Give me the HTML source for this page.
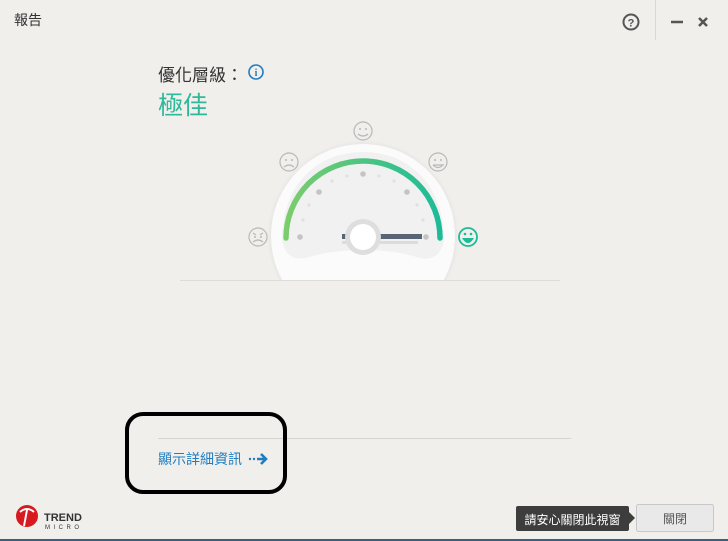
<!DOCTYPE html>
<html><head><meta charset="utf-8"><style>
body{margin:0;width:728px;height:541px;background:#f0efec;position:relative;overflow:hidden;font-family:"Liberation Sans","Noto Sans CJK TC",sans-serif;}
.a{position:absolute}
</style></head><body>
<div class="a" style="left:14px;top:10px;font-size:14px;color:#333">報告</div>
<svg class="a" style="left:0;top:0" width="728" height="541">
 <circle cx="631" cy="22" r="7.5" fill="none" stroke="#555" stroke-width="2"/>
 <text x="631" y="26.5" font-size="11" font-weight="bold" text-anchor="middle" fill="#555" font-family="Liberation Sans">?</text>
 <line x1="655.5" y1="0" x2="655.5" y2="40" stroke="#d8d7d3"/>
 <line x1="671" y1="22" x2="683" y2="22" stroke="#555" stroke-width="2.5"/>
 <path d="M699 18L707 26M707 18L699 26" stroke="#555" stroke-width="2.5"/>
 <!-- info icon -->
 <circle cx="256" cy="72" r="7" fill="none" stroke="#1f7ec1" stroke-width="1.6"/>
 <text x="256" y="76" font-size="10" font-weight="bold" text-anchor="middle" fill="#1f7ec1" font-family="Liberation Serif">i</text>
 <!-- gauge -->
 <defs>
  <linearGradient id="g" x1="0" x2="1"><stop offset="0" stop-color="#7ccd6c"/><stop offset="1" stop-color="#1dbb98"/></linearGradient>
  <clipPath id="c"><rect x="0" y="0" width="728" height="280"/></clipPath>
  <radialGradient id="sh" cx="0.5" cy="0.5" r="0.5"><stop offset="0.9" stop-color="#ddd"/><stop offset="1" stop-color="#f0efec"/></radialGradient>
 </defs>
 <line x1="180" y1="280.5" x2="560" y2="280.5" stroke="#dddcd8"/>
 <g clip-path="url(#c)">
  <circle cx="363" cy="236" r="96" fill="url(#sh)"/>
  <circle cx="363" cy="236" r="92" fill="#fbfbfb"/>
  <path d="M282 240 Q283 180 330 158 Q363 146 396 158 Q443 180 444 240 Q440 262 420 258 Q395 250 363 250 Q331 250 306 258 Q286 262 282 240Z" fill="#f1f1f1"/>
 </g>
 <path d="M286 238 A77 77 0 0 1 440 238" fill="none" stroke="url(#g)" stroke-width="5.5" stroke-linecap="round"/>
 <g fill="#c4c4c4">
  <circle cx="300" cy="237" r="2.8"/><circle cx="319" cy="192" r="2.8"/><circle cx="363" cy="174" r="2.8"/><circle cx="407" cy="192" r="2.8"/><circle cx="426" cy="237" r="2.8"/>
 </g>
 <g fill="#e0e0e0">
  <circle cx="303" cy="220" r="1.6"/><circle cx="309" cy="205" r="1.6"/><circle cx="332" cy="181" r="1.6"/><circle cx="347" cy="176" r="1.6"/><circle cx="379" cy="176" r="1.6"/><circle cx="394" cy="181" r="1.6"/><circle cx="417" cy="205" r="1.6"/><circle cx="423" cy="220" r="1.6"/>
 </g>
 <rect x="342" y="234" width="80" height="5" fill="#576575"/>
 <rect x="342" y="241" width="76" height="3" fill="#dcdcdc"/>
 <circle cx="363" cy="237" r="18" fill="#dedede"/>
 <circle cx="363" cy="237" r="13" fill="#fff"/>
 <!-- faces -->
 <g fill="none" stroke="#b8b8b8" stroke-width="1.2">
  <circle cx="363" cy="131" r="9"/><path d="M358 134 Q363 138 368 134"/>
  <circle cx="289" cy="162" r="9"/><path d="M284 167 Q289 163 294 167"/>
  <circle cx="438" cy="162" r="9"/><path d="M433 165 L443 165 Q438 170 433 165"/>
  <circle cx="258" cy="237" r="9"/><path d="M253 242 Q258 238 263 242M253 233 L256 235M263 233 L260 235"/>
 </g>
 <g fill="#b8b8b8"><circle cx="360" cy="129" r="1"/><circle cx="366" cy="129" r="1"/><circle cx="286" cy="160" r="1"/><circle cx="292" cy="160" r="1"/><circle cx="435" cy="160" r="1"/><circle cx="441" cy="160" r="1"/><circle cx="255" cy="237" r="1"/><circle cx="261" cy="237" r="1"/></g>
 <circle cx="468" cy="237" r="9" fill="none" stroke="#1dbb98" stroke-width="1.8"/>
 <path d="M462 238 L474 238 Q468 248 462 238Z" fill="#1dbb98"/>
 <circle cx="465" cy="234" r="1.3" fill="#1dbb98"/><circle cx="471" cy="234" r="1.3" fill="#1dbb98"/>
 <!-- divider -->
 <line x1="158" y1="438.5" x2="571" y2="438.5" stroke="#d6d5d1"/>
 <!-- arrow -->
 <circle cx="250" cy="459" r="1.2" fill="#1f7ec1"/><circle cx="254" cy="459" r="1.2" fill="#1f7ec1"/>
 <path d="M257 459 L265 459 M261 454 L266 459 L261 464" stroke="#1f7ec1" stroke-width="2.6" fill="none"/>
 <!-- black box -->
 <rect x="127" y="414" width="158" height="78" rx="16" fill="none" stroke="#000" stroke-width="4"/>
 <!-- logo -->
 <circle cx="27" cy="516" r="11" fill="#d71920"/>
 <path d="M20 512 Q27 506 34 512 M27 510 L24 526" stroke="#fff" stroke-width="2" fill="none"/>
 <text x="44" y="521" font-size="11" font-weight="bold" fill="#333" font-family="Liberation Sans">TREND</text>
 <text x="45" y="529" font-size="6" fill="#333" letter-spacing="3.5" font-family="Liberation Sans">MICRO</text>
 <!-- tooltip & button -->
 <rect x="516" y="506" width="113" height="25" rx="2" fill="#3d3d3d"/>
 <path d="M629 512 L635 518 L629 524Z" fill="#3d3d3d"/>
 <rect x="636.5" y="504.5" width="77" height="27" rx="2" fill="#e9e9e9" stroke="#c8c8c8"/>
 <rect x="0" y="539" width="728" height="2" fill="#3a5f80"/>
</svg>
<div class="a" style="left:158px;top:61px;font-size:17px;color:#333">優化層級：</div>
<div class="a" style="left:158px;top:86px;font-size:25px;color:#2fb89a">極佳</div>
<div class="a" style="left:158px;top:449px;font-size:14px;color:#1f7ec1">顯示詳細資訊</div>
<div class="a" style="left:516px;top:511px;width:113px;text-align:center;font-size:12px;color:#fff">請安心關閉此視窗</div>
<div class="a" style="left:636px;top:510px;width:78px;text-align:center;font-size:12px;color:#555">關閉</div>
</body></html>
